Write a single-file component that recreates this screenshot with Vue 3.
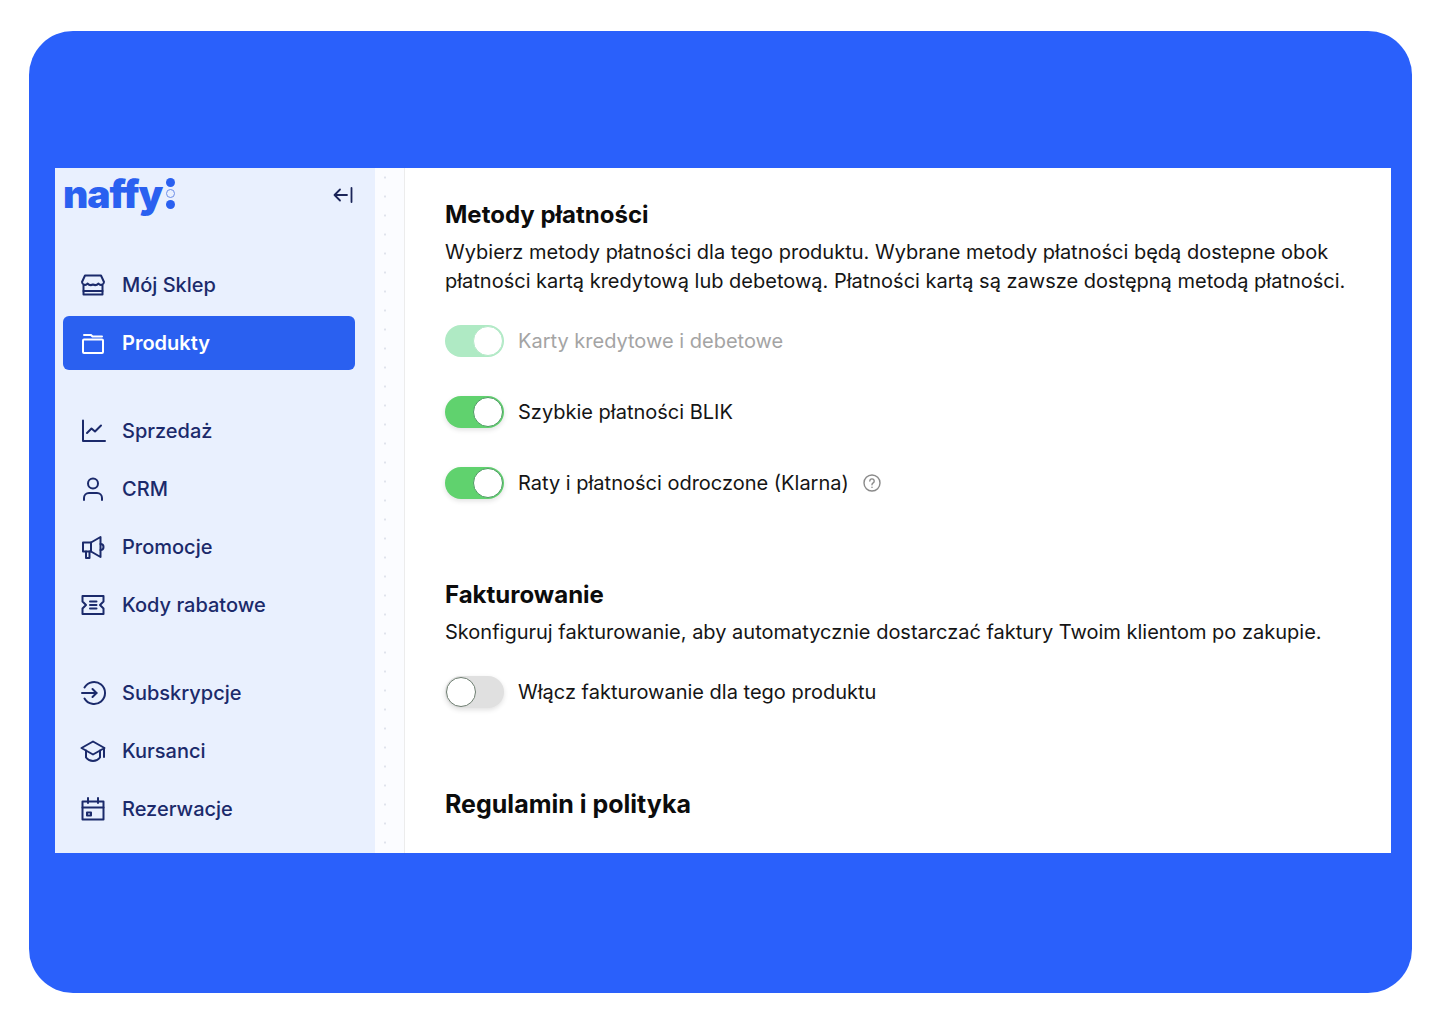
<template>
  <div class="page">
    <div class="frame">
      <div class="window">
        <aside class="sidebar">
          <div class="logo-row">
            <div class="logo">
              <span class="logo-text">naffy</span>
              <div class="logo-dots"><i></i><i class="ring"></i><i></i></div>
            </div>
            <svg class="collapse" width="24" height="24" viewBox="0 0 24 24" fill="none" stroke="#1b2559" stroke-width="1.8" stroke-linecap="round" stroke-linejoin="round">
              <path d="M16 12H3.5M9 6.5 3.5 12 9 17.5M20.5 5v14" />
            </svg>
          </div>

          <nav v-for="(group, i) in navGroups" :key="i" class="nav-group">
            <div v-for="item in group" :key="item.label" class="nav-item" :class="{ active: item.active }">
              <svg class="nav-icon" width="28" height="28" viewBox="0 0 28 28" fill="none" stroke="currentColor" stroke-width="2" stroke-linecap="round" stroke-linejoin="round">
                <path v-for="d in item.icon" :key="d" :d="d" />
              </svg>
              <span>{{ item.label }}</span>
            </div>
          </nav>
        </aside>

        <div class="strip"></div>

        <main class="content">
          <section class="block block-pay">
            <h2>Metody płatności</h2>
            <p>Wybierz metody płatności dla tego produktu. Wybrane metody płatności będą dostepne obok<br />płatności kartą kredytową lub debetową. Płatności kartą są zawsze dostępną metodą płatności.</p>
            <div class="options">
              <div v-for="opt in payOptions" :key="opt.label" class="option" :class="{ disabled: opt.disabled }">
                <div class="toggle on"><span class="knob"></span></div>
                <span class="option-label">{{ opt.label }}</span>
                <svg v-if="opt.help" class="help" width="20" height="20" viewBox="0 0 20 20" fill="none" stroke="#8a8a8a" stroke-width="1.4" stroke-linecap="round">
                  <circle cx="10" cy="10" r="8" />
                  <path d="M7.8 8a2.2 2.2 0 1 1 3.4 1.9c-.8.5-1.2.9-1.2 1.8" />
                  <path d="M10 14.3v.1" />
                </svg>
              </div>
            </div>
          </section>

          <section class="block block-inv">
            <h2>Fakturowanie</h2>
            <p>Skonfiguruj fakturowanie, aby automatycznie dostarczać faktury Twoim klientom po zakupie.</p>
            <div class="options options-inv">
              <div class="option">
                <div class="toggle"><span class="knob"></span></div>
                <span class="option-label">Włącz fakturowanie dla tego produktu</span>
              </div>
            </div>
          </section>

          <section class="block block-terms">
            <h2 class="h-terms">Regulamin i polityka</h2>
          </section>
        </main>
      </div>
    </div>
  </div>
</template>

<script setup>
const navGroups = [
  [
    {
      label: "Mój Sklep",
      icon: [
        "M6 4.5h16l3 6.5a3 3 0 0 1-5.5 1.5 4.6 4.6 0 0 1-5.5 1 4.6 4.6 0 0 1-5.5-1A3 3 0 0 1 3 11z",
        "M4.5 14v9.5h19V14",
        "M4.5 20h19",
      ],
    },
    {
      label: "Produkty",
      active: true,
      icon: ["M5 10.5h18a1 1 0 0 1 1 1V23a1 1 0 0 1-1 1H5a1 1 0 0 1-1-1V11.5a1 1 0 0 1 1-1z", "M5 6h7l1.5 1.5H23"],
    },
  ],
  [
    { label: "Sprzedaż", icon: ["M4 3.5v20.5h22", "M8 16l4.5-4.5 3.5 3 6-6"] },
    { label: "CRM", icon: ["M14 3.5a5 5 0 1 1 0 10 5 5 0 0 1 0-10z", "M5 25v-2a5 5 0 0 1 5-5h8a5 5 0 0 1 5 5v2"] },
    {
      label: "Promocje",
      icon: [
        "M21.5 4v20L12 18.5H4V9.5h8z",
        "M12 9.5v9",
        "M7 18.5V25h3.5v-6.5",
        "M21.5 11a3 3 0 0 1 0 6",
      ],
    },
    {
      label: "Kody rabatowe",
      icon: [
        "M3.5 5h21v5.5L21 14l3.5 3.5V23h-21v-5.5L7 14l-3.500-3.500z",
        "M11 10.500h6.500M11 14h6.500M11 17.500h6.500",
      ],
    },
  ],
  [
    {
      label: "Subskrypcje",
      icon: ["M5.500 8.500a11 11 0 1 1 0 11", "M3 14h14.500", "M13.500 10l4 4-4 4"],
    },
    {
      label: "Kursanci",
      icon: [
        "M14 4.500 2.500 11 14 17.500 25.500 11z",
        "M7 13.500v7c2 2.500 4.500 3.500 7 3.500s5-1 7-3.500v-7",
        "M25 11v9",
      ],
    },
    {
      label: "Rezerwacje",
      icon: [
        "M3.500 6.500h21v18h-21z",
        "M3.500 12.500h21",
        "M9 3v5M19 3v5",
        "M8 17.500h4v3H8z",
      ],
    },
  ],
];

const payOptions = [
  { label: "Karty kredytowe i debetowe", disabled: true },
  { label: "Szybkie płatności BLIK" },
  { label: "Raty i płatności odroczone (Klarna)", help: true },
];
</script>

<style>
html, body {
  margin: 0;
  background: #fff;
}
</style>

<style scoped>
.page {
  width: 1440px;
  height: 1024px;
  padding: 31px 28px 31px 29px;
  box-sizing: border-box;
  overflow: hidden;
  font-family: Inter, "Liberation Sans", sans-serif;
}

.frame {
  height: 100%;
  box-sizing: border-box;
  background: #2a60fb;
  border-radius: 44px;
  padding: 137px 21px 140px 26px;
}

.window {
  height: 100%;
  background: #fff;
  display: flex;
  overflow: hidden;
}

.sidebar {
  width: 320px;
  flex-shrink: 0;
  box-sizing: border-box;
  background: #e9f0fe;
  padding: 0 20px 0 8px;
}

.logo-row {
  height: 90px;
  display: flex;
  justify-content: space-between;
  align-items: flex-start;
}

.logo {
  display: flex;
  align-items: flex-start;
  margin-top: 3px;
}

.logo-text {
  color: #2a60f0;
  font-size: 39px;
  font-weight: 900;
  line-height: 46px;
  letter-spacing: -1.1px;
}

.logo-dots {
  display: flex;
  flex-direction: column;
  gap: 2px;
  margin: 7px 0 0 4px;
}

.logo-dots i {
  width: 9px;
  height: 9px;
  border-radius: 50%;
  background: #2a60f0;
  box-sizing: border-box;
}

.logo-dots i.ring {
  background: transparent;
  border: 1px solid #6d8fe8;
}

.collapse {
  margin: 15px 0 0 0;
  transform: translateX(0);
}

.nav-group {
  display: flex;
  flex-direction: column;
  gap: 4px;
  margin-bottom: 34px;
}

.nav-item {
  height: 54px;
  border-radius: 6px;
  display: flex;
  align-items: center;
  gap: 15px;
  padding-left: 16px;
  color: #1b2a6b;
  font-size: 20px;
  font-weight: 500;
}

.nav-item.active {
  background: #2a60f0;
  color: #fff;
  font-weight: 600;
}

.nav-icon {
  flex-shrink: 0;
}

.strip {
  width: 29px;
  flex-shrink: 0;
  border-right: 1px solid #ececec;
  background-color: #fbfcff;
  background-image: radial-gradient(circle, #dfe3ec 1px, transparent 1.2px);
  background-size: 20px 19px;
  background-position: 0 0;
}

.content {
  flex: 1;
  min-width: 0;
  padding: 31px 0 0 40px;
  color: #111;
}

h2 {
  margin: 0;
  font-size: 24px;
  line-height: 32px;
  font-weight: 700;
  color: #0c0c0c;
}

.h-terms {
  font-size: 25px;
}

p {
  margin: 7px 0 0;
  font-size: 20px;
  line-height: 29px;
  white-space: nowrap;
  color: #151515;
}

.options {
  margin-top: 29px;
  display: flex;
  flex-direction: column;
  gap: 39px;
}

.options-inv {
  margin-top: 29px;
}

.option {
  height: 32px;
  display: flex;
  align-items: center;
  gap: 14px;
  font-size: 20px;
  color: #151515;
}

.toggle {
  width: 59px;
  height: 32px;
  box-sizing: border-box;
  border-radius: 16px;
  background: #e0e0e0;
  position: relative;
  box-shadow: 0 2px 5px rgba(0, 0, 0, 0.12);
  flex-shrink: 0;
}

.toggle.on {
  background: #60d26e;
}

.knob {
  position: absolute;
  top: 1px;
  left: 1px;
  width: 30px;
  height: 30px;
  box-sizing: border-box;
  border-radius: 50%;
  background: #fff;
  border: 1px solid #6d7d70;
}

.toggle.on .knob {
  left: 28px;
  border-color: #4d9b62;
}

.option.disabled {
  color: #a4a4a4;
}

.option.disabled .toggle {
  background: #afeac4;
  box-shadow: none;
}

.option.disabled .knob {
  border-color: #b3e8c7;
}

.help {
  margin-left: -1px;
}

.block-inv {
  margin-top: 80px;
}

.block-terms {
  margin-top: 80px;
}
</style>
